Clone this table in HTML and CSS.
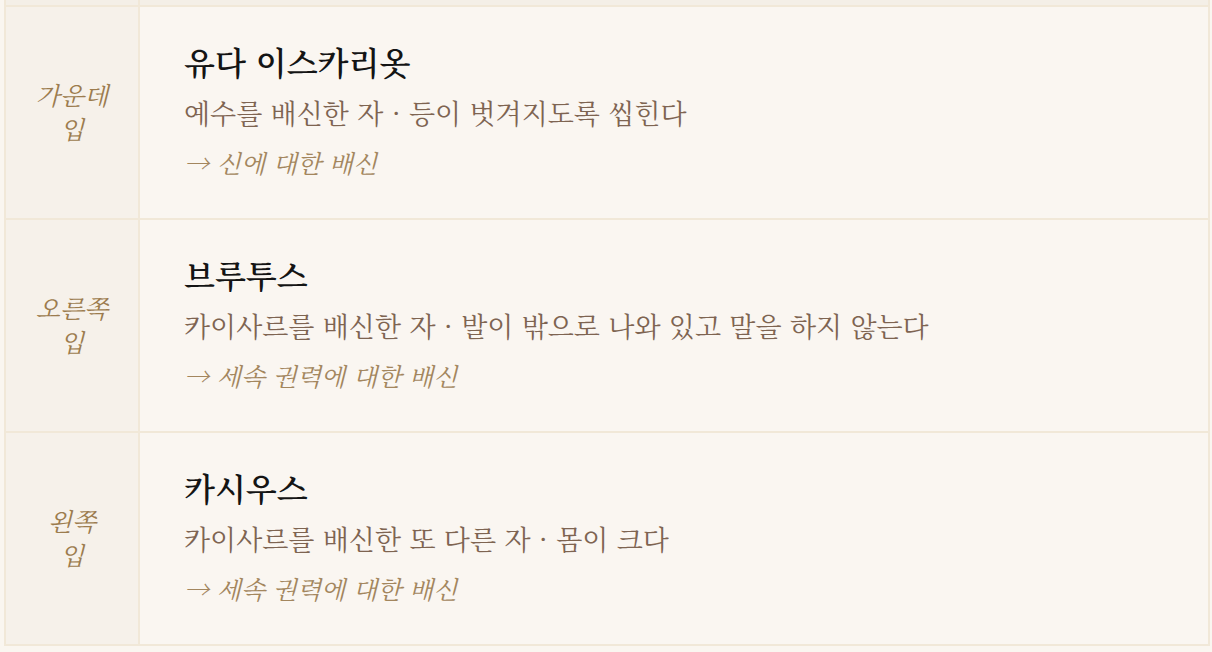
FILE: index.html
```html
<!DOCTYPE html>
<html lang="ko">
<head>
<meta charset="utf-8">
<link rel="stylesheet" href="styles.css">
</head>
<body>
<div class="page">
  <table class="mouths">
    <thead>
      <tr class="head-row"><th class="side"></th><th class="main"></th></tr>
    </thead>
    <tbody>
      <tr>
        <td class="side"><em>가운데<br>입</em></td>
        <td class="main">
          <div class="name">유다 이스카리옷</div>
          <div class="desc">예수를 배신한 자 · 등이 벗겨지도록 씹힌다</div>
          <div class="note">→ 신에 대한 배신</div>
        </td>
      </tr>
      <tr>
        <td class="side"><em>오른쪽<br>입</em></td>
        <td class="main">
          <div class="name">브루투스</div>
          <div class="desc">카이사르를 배신한 자 · 발이 밖으로 나와 있고 말을 하지 않는다</div>
          <div class="note">→ 세속 권력에 대한 배신</div>
        </td>
      </tr>
      <tr>
        <td class="side"><em>왼쪽<br>입</em></td>
        <td class="main">
          <div class="name">카시우스</div>
          <div class="desc">카이사르를 배신한 또 다른 자 · 몸이 크다</div>
          <div class="note">→ 세속 권력에 대한 배신</div>
        </td>
      </tr>
    </tbody>
  </table>
</div>
</body>
</html>
```

FILE: styles.css
```css
html, body {
  margin: 0;
  padding: 0;
  background: #faf6f0;
}
body {
  font-family: "Noto Serif CJK KR", "Noto Serif KR", "Nanum Myeongjo", "NanumMyeongjo", "UnBatang", "Baekmuk Batang", "Source Han Serif K", "DejaVu Serif", serif;
}
.page {
  padding: 0 2px 0 4px;
  margin-top: -20px;
}
.mouths {
  width: 100%;
  border-collapse: collapse;
  border: 2px solid #f1e8d8;
}
.mouths th, .mouths td {
  border: 2px solid #f1e8d8;
  padding: 0;
}
.head-row th {
  height: 23px;
  background: #f4efe7;
}
.side {
  width: 132px;
  background: #f6f1ea;
  text-align: center;
  vertical-align: middle;
  color: #9c7c4e;
  font-size: 25px;
  line-height: 34px;
}
.side em {
  display: inline-block;
  font-style: italic;
  margin-bottom: 4px;
}
td.main {
  background: #faf6f1;
  padding: 34px 44px 38px 44px;
  height: 139px;
  vertical-align: middle;
}
.name {
  font-size: 32px;
  font-weight: 600;
  color: #141414;
  line-height: 40px;
}
.desc {
  margin-top: 13px;
  font-size: 27px;
  color: #7e6451;
  line-height: 38px;
}
.note {
  margin-top: 12px;
  font-size: 25px;
  font-style: italic;
  color: #a3865e;
  line-height: 36px;
}
```
